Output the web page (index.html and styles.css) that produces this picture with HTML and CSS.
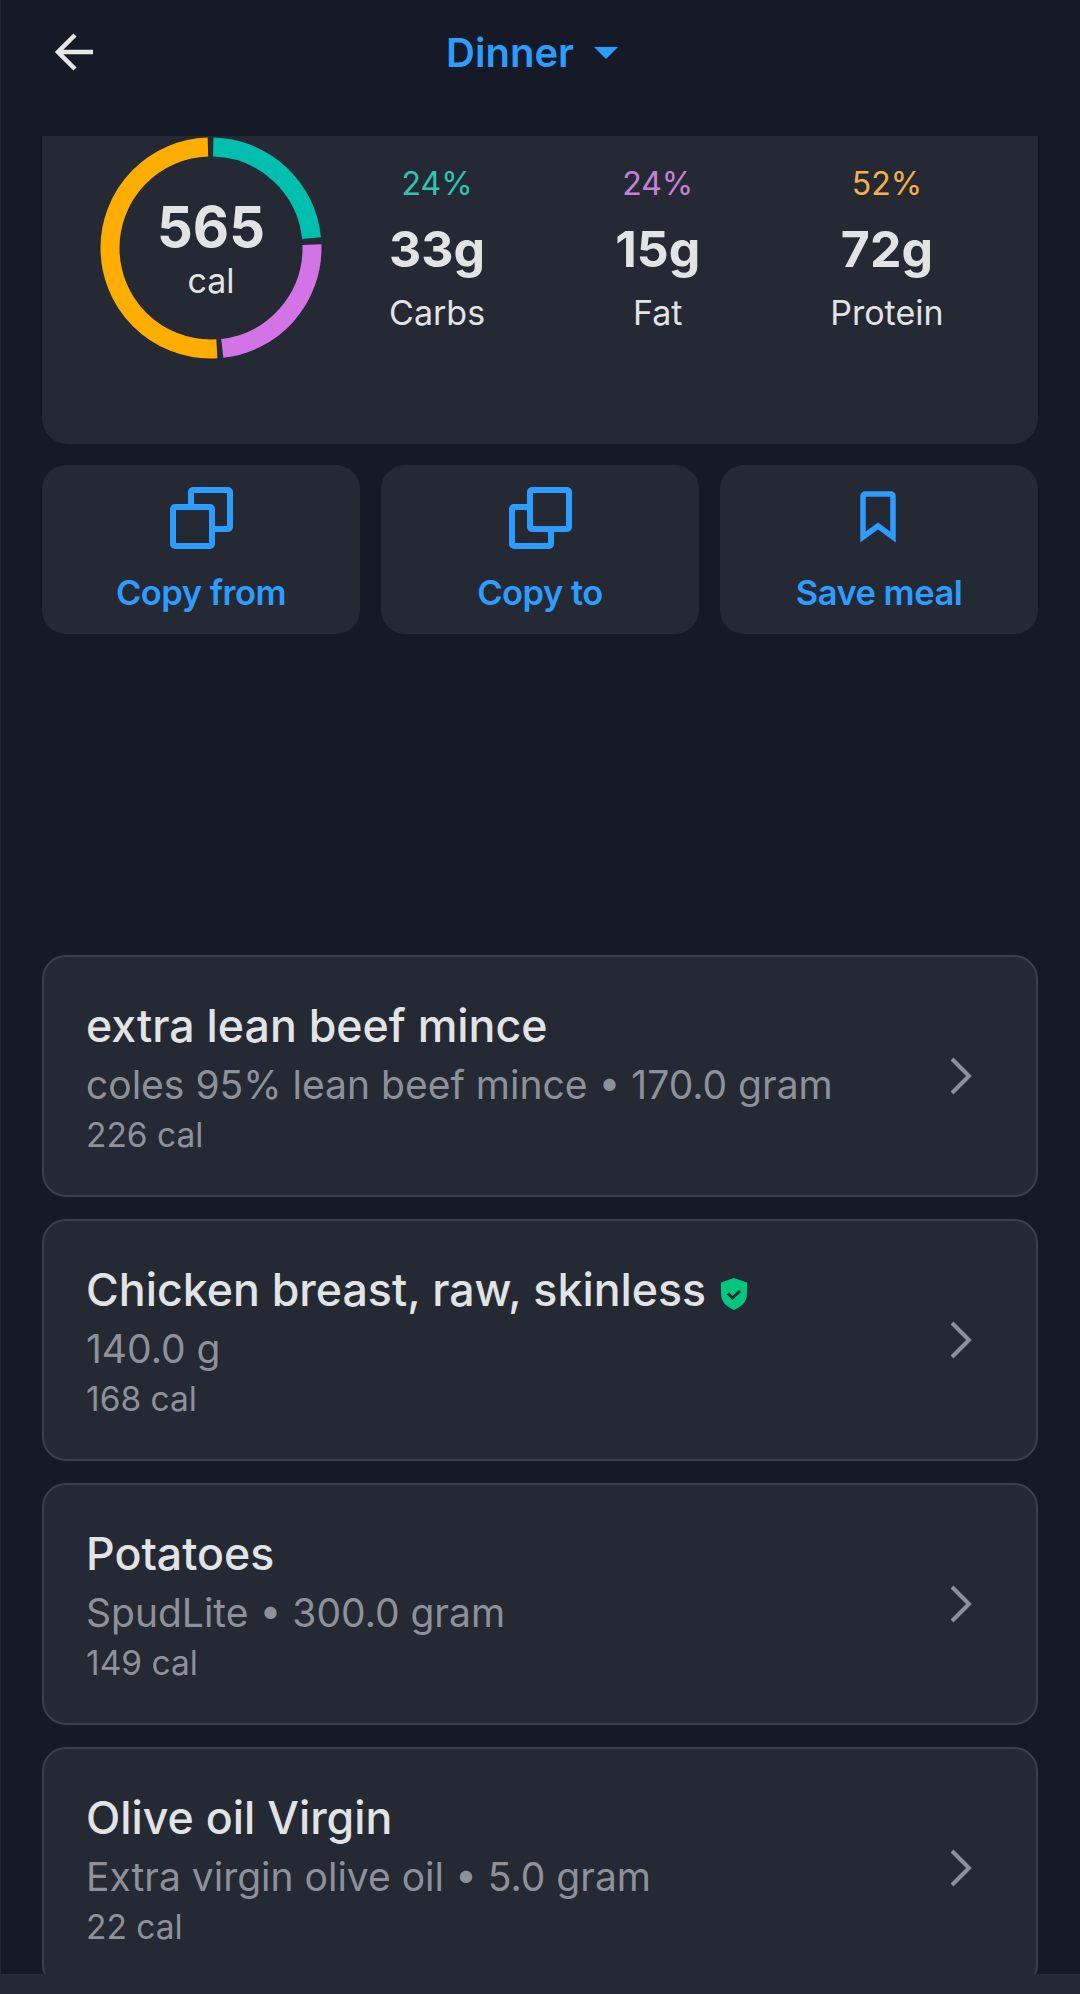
FILE: index.html
```html
<!DOCTYPE html>
<html lang="en">
<head>
    <meta charset="UTF-8">
    <meta name="viewport" content="width=device-width, initial-scale=1.0">
    <title>Dinner</title>
    <link rel="stylesheet" href="styles.css">
</head>
<body>
    <div class="page">
        <header class="top-bar">
            <svg class="back-icon" viewBox="0 0 44 44" width="44" height="44">
                <path d="M40 22H5M22 5L5 22l17 17" fill="none" stroke="#e8e8e8" stroke-width="4.5"/>
            </svg>
            <div class="meal-title">Dinner</div>
            <div class="caret"></div>
        </header>

        <section class="summary">
            <div class="ring">
                <svg viewBox="0 0 222 222" width="222" height="222">
                    <g class="ring-arcs" fill="none" stroke-width="19">
                        <circle cx="111" cy="111" r="101" pathLength="360" stroke="#00bfae" stroke-dasharray="83 277" stroke-dashoffset="-1.3"/>
                        <circle cx="111" cy="111" r="101" pathLength="360" stroke="#d274e6" stroke-dasharray="85.5 274.5" stroke-dashoffset="-88"/>
                        <circle cx="111" cy="111" r="101" pathLength="360" stroke="#ffae00" stroke-dasharray="181.6 178.4" stroke-dashoffset="-176.6"/>
                    </g>
                </svg>
                <div class="ring-label">
                    <div class="ring-num">565</div>
                    <div class="ring-unit">cal</div>
                </div>
            </div>
            <div class="macros">
                <div class="macro">
                    <div class="pct pct-carbs">24%</div>
                    <div class="grams">33g</div>
                    <div class="macro-name">Carbs</div>
                </div>
                <div class="macro">
                    <div class="pct pct-fat">24%</div>
                    <div class="grams">15g</div>
                    <div class="macro-name">Fat</div>
                </div>
                <div class="macro">
                    <div class="pct pct-protein">52%</div>
                    <div class="grams">72g</div>
                    <div class="macro-name">Protein</div>
                </div>
            </div>
        </section>

        <section class="actions">
            <div class="action">
                <svg class="action-icon" viewBox="0 0 64 64" width="64" height="64">
                    <rect x="22" y="3" width="39" height="39" rx="2" fill="none" stroke="#2d9cff" stroke-width="6"/>
                    <rect x="4" y="20" width="39" height="39" rx="2" fill="#252933" stroke="#2d9cff" stroke-width="6"/>
                </svg>
                <span>Copy from</span>
            </div>
            <div class="action">
                <svg class="action-icon" viewBox="0 0 64 64" width="64" height="64">
                    <rect x="4" y="20" width="39" height="39" rx="2" fill="none" stroke="#2d9cff" stroke-width="6"/>
                    <rect x="22" y="3" width="39" height="39" rx="2" fill="#252933" stroke="#2d9cff" stroke-width="6"/>
                </svg>
                <span>Copy to</span>
            </div>
            <div class="action">
                <svg class="action-icon" viewBox="0 0 64 64" width="64" height="64">
                    <path d="M16 9a2 2 0 0 1 2-2h26a2 2 0 0 1 2 2v41L31 39 16 50z" fill="none" stroke="#2d9cff" stroke-width="5.500"/>
                </svg>
                <span>Save meal</span>
            </div>
        </section>

        <section class="food-list">
            <div class="food">
                <div class="food-text">
                    <div class="food-name">extra lean beef mince</div>
                    <div class="food-desc">coles 95% lean beef mince • 170.0 gram</div>
                    <div class="food-cal">226 cal</div>
                </div>
                <svg class="chevron" viewBox="0 0 24 40" width="24" height="40"><path d="M3 3l17 17L3 37" fill="none" stroke="#8e919a" stroke-width="4"/></svg>
            </div>
            <div class="food">
                <div class="food-text">
                    <div class="food-name">Chicken breast, raw, skinless
                        <svg class="verified" viewBox="0 0 28 32" width="28" height="32">
                            <path d="M14 0l13 4.500V16c0 8-6 13-13 16C7 29 1 24 1 16V4.500z" fill="#00c77d"/>
                            <path d="M8 15.500l4.500 4.500 7.500-7" fill="none" stroke="#252933" stroke-width="3"/>
                        </svg>
                    </div>
                    <div class="food-desc">140.0 g</div>
                    <div class="food-cal">168 cal</div>
                </div>
                <svg class="chevron" viewBox="0 0 24 40" width="24" height="40"><path d="M3 3l17 17L3 37" fill="none" stroke="#8e919a" stroke-width="4"/></svg>
            </div>
            <div class="food">
                <div class="food-text">
                    <div class="food-name">Potatoes</div>
                    <div class="food-desc">SpudLite • 300.0 gram</div>
                    <div class="food-cal">149 cal</div>
                </div>
                <svg class="chevron" viewBox="0 0 24 40" width="24" height="40"><path d="M3 3l17 17L3 37" fill="none" stroke="#8e919a" stroke-width="4"/></svg>
            </div>
            <div class="food">
                <div class="food-text">
                    <div class="food-name">Olive oil Virgin</div>
                    <div class="food-desc">Extra virgin olive oil • 5.0 gram</div>
                    <div class="food-cal">22 cal</div>
                </div>
                <svg class="chevron" viewBox="0 0 24 40" width="24" height="40"><path d="M3 3l17 17L3 37" fill="none" stroke="#8e919a" stroke-width="4"/></svg>
            </div>
        </section>

        <div class="bottom-strip"></div>
    </div>
</body>
</html>
```

FILE: styles.css
```css
body {
    margin: 0;
    background: #151a26;
    font-family: 'Inter', 'Liberation Sans', sans-serif;
    color: #e2e3e5;
}

.page {
    position: relative;
    width: 1080px;
    height: 1994px;
    overflow: hidden;
    background: #151a26;
    box-shadow: inset 1px 0 0 #252933;
}

/* header */
.top-bar {
    position: relative;
    height: 136px;
    display: flex;
    justify-content: center;
    align-items: flex-start;
    gap: 20px;
    padding: 29px 16px 0 0;
    box-sizing: border-box;
}

.back-icon {
    position: absolute;
    left: 53px;
    top: 30px;
}

.meal-title {
    font-size: 40px;
    line-height: 48px;
    font-weight: 600;
    color: #2d9cff;
}

.caret {
    margin-top: 18px;
    width: 0;
    height: 0;
    border-left: 12px solid transparent;
    border-right: 12px solid transparent;
    border-top: 12px solid #2d9cff;
}

/* summary card */
.summary {
    margin: 0 42px;
    height: 308px;
    box-sizing: border-box;
    padding-left: 58px;
    display: flex;
    align-items: flex-start;
    background: #252933;
    border-radius: 0 0 26px 26px;
}

.ring {
    position: relative;
    width: 222px;
    height: 222px;
    margin-top: 1px;
}

.ring-arcs {
    transform: rotate(-90deg);
    transform-origin: 111px 111px;
}

.ring-label {
    position: absolute;
    top: 0;
    left: 0;
    width: 100%;
    text-align: center;
}

.ring-num {
    margin-top: 58px;
    font-size: 56px;
    line-height: 64px;
    font-weight: 700;
}

.ring-unit {
    font-size: 34px;
    line-height: 40px;
    margin-top: 2px;
}

.macros {
    display: flex;
    gap: 130px;
    margin-left: 67px;
    padding-top: 28px;
    text-align: center;
}

.pct {
    font-size: 32px;
    line-height: 40px;
}

.pct-carbs { color: #2ec4b6; }
.pct-fat { color: #c77fdc; }
.pct-protein { color: #f5b04c; }

.grams {
    margin-top: 15px;
    font-size: 50px;
    line-height: 60px;
    font-weight: 700;
}

.macro-name {
    margin-top: 14px;
    font-size: 34px;
    line-height: 40px;
}

/* buttons */
.actions {
    display: flex;
    gap: 21px;
    margin: 21px 42px 0;
}

.action {
    flex: 1;
    height: 169px;
    display: flex;
    flex-direction: column;
    align-items: center;
    padding-top: 22px;
    box-sizing: border-box;
    background: #252933;
    border-radius: 24px;
    color: #2d9cff;
    font-size: 34.500px;
    line-height: 40px;
    font-weight: 600;
    letter-spacing: -0.5px;
}

.action-icon {
    margin-bottom: 22px;
}

/* list */
.food-list {
    display: flex;
    flex-direction: column;
    gap: 22px;
    margin: 321px 42px 0;
}

.food {
    height: 242px;
    box-sizing: border-box;
    border: 2px solid #3a3f4b;
    border-radius: 24px;
    background: #252933;
    padding: 0 63px 0 42px;
    display: flex;
    align-items: center;
    justify-content: space-between;
}

.food-text {
    padding-top: 4px;
}

.food-name {
    font-size: 44.700px;
    line-height: 56px;
    font-weight: 500;
    color: #e2e3e5;
}

.verified {
    margin-left: 2px;
    vertical-align: -4px;
}

.food-desc {
    margin-top: 4px;
    font-size: 39px;
    line-height: 54px;
    color: #8e919a;
}

.food-cal {
    font-size: 33.500px;
    line-height: 46px;
    color: #8e919a;
}

.chevron {
    flex-shrink: 0;
}

.bottom-strip {
    position: absolute;
    left: 0;
    right: 0;
    bottom: 0;
    height: 20px;
    background: #252933;
}
```
